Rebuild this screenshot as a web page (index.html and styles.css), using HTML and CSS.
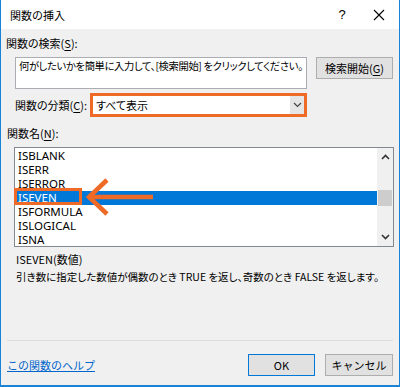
FILE: index.html
```html
<!DOCTYPE html>
<html>
<head>
  <title>関数の挿入</title>
  <link rel="stylesheet" href="styles.css">
</head>
<body>
  <div class="dialog">
    <div class="titlebar">
      <div class="title">関数の挿入</div>
      <div class="help-btn">?</div>
      <div class="close-btn">
        <svg width="12" height="12" viewBox="0 0 12 12"><path d="M1 1 L11 11 M11 1 L1 11" stroke="#000" stroke-width="1.1" fill="none"/></svg>
      </div>
    </div>

    <div class="content">
      <div class="label label-search">関数の検索(<u>S</u>):</div>
      <div class="search-row">
        <div class="search-box">何がしたいかを簡単に入力して、[検索開始] をクリックしてください。</div>
        <div class="btn btn-search">検索開始(<u>G</u>)</div>
      </div>

      <div class="category-row">
        <div class="label">関数の分類(<u>C</u>):</div>
        <div class="select">
          <span class="select-text">すべて表示</span>
          <span class="select-drop">
            <svg width="9" height="6" viewBox="0 0 9 6"><path d="M1 1 L4.5 4.5 L8 1" stroke="#444" stroke-width="1.2" fill="none"/></svg>
          </span>
        </div>
      </div>

      <div class="label label-names">関数名(<u>N</u>):</div>
      <div class="listbox">
        <div class="items">
          <div class="item">ISBLANK</div>
          <div class="item">ISERR</div>
          <div class="item">ISERROR</div>
          <div class="item selected">ISEVEN</div>
          <div class="item">ISFORMULA</div>
          <div class="item">ISLOGICAL</div>
          <div class="item">ISNA</div>
        </div>
        <div class="scrollbar">
          <svg class="sb-arrow" width="9" height="6" viewBox="0 0 9 6"><path d="M1 5 L4.5 1.5 L8 5" stroke="#333" stroke-width="1.6" fill="none"/></svg>
          <div class="sb-track"><div class="sb-thumb"></div></div>
          <svg class="sb-arrow" width="9" height="6" viewBox="0 0 9 6"><path d="M1 1 L4.5 4.5 L8 1" stroke="#333" stroke-width="1.6" fill="none"/></svg>
        </div>
        <div class="mark-box"></div>
        <svg class="mark-arrow" width="70" height="40" viewBox="0 0 70 40">
          <path d="M3 20 L68 20" stroke="#ee6a26" stroke-width="4.5" fill="none"/>
          <path d="M22 3 L4 20 L22 37" stroke="#ee6a26" stroke-width="4.5" fill="none"/>
        </svg>
      </div>

      <div class="desc">
        <div class="syntax">ISEVEN(数値)</div>
        <div class="explain">引き数に指定した数値が偶数のとき TRUE を返し、奇数のとき FALSE を返します。</div>
      </div>
    </div>

    <div class="footer">
      <a class="help-link" href="#">この関数のヘルプ</a>
      <div class="btn btn-ok">OK</div>
      <div class="btn btn-cancel">キャンセル</div>
    </div>
  </div>
</body>
</html>
```

FILE: styles.css
```css
body { margin: 0; font-family: "Noto Sans CJK JP", sans-serif; font-size: 11px; color: #000; }
u { text-decoration-thickness: 1px; text-underline-offset: 2px; }

.dialog { width: 400px; height: 387px; box-sizing: border-box; background: #f0f0f0; border: 1px solid #1883d7; border-top: none; border-bottom-width: 2px; display: flex; flex-direction: column; }

.titlebar { height: 29px; background: #fff; display: flex; align-items: center; flex-shrink: 0; }
.title { padding-left: 9px; flex: 1; font-size: 11px; }
.help-btn { width: 20px; text-align: center; font-family: "Liberation Sans", sans-serif; font-size: 13px; margin-right: 21px; }
.close-btn { width: 12px; height: 12px; margin-right: 14px; display: flex; }

.content { padding: 0 5px; line-height: 14px; font-feature-settings: "palt"; }
.label-search { margin-top: 7px; }

.search-row { display: flex; margin-top: 7px; padding-left: 9px; align-items: flex-start; }
.search-box { background: #fff; border: 1px solid #abadb3; padding: 1px 3px; box-sizing: border-box; width: 292px; height: 32px; line-height: 14px; font-size: 10.3px; letter-spacing: -0.35px; white-space: nowrap; overflow: hidden; }
.btn { height: 22px; box-sizing: border-box; border: 1px solid #adadad; background: #e1e1e1; display: flex; align-items: center; justify-content: center; }
.btn-search { width: 77px; margin-left: 9px; }

.category-row { display: flex; align-items: center; margin-top: 4px; padding-left: 9px; }
.category-row .label { width: 75px; }
.select { width: 217px; height: 24px; box-sizing: border-box; border: 3px solid #ee6a26; background: #fff; display: flex; align-items: stretch; }
.select-text { flex: 1; padding-left: 3px; display: flex; align-items: center; }
.select-drop { width: 14px; background: #e5e5e5; display: flex; align-items: center; justify-content: center; }

.label-names { margin-top: 9px; padding-left: 1px; }

.listbox { position: relative; margin: 7px 0 0 8px; width: 380px; height: 100px; box-sizing: border-box; border: 1px solid #828790; background: #fff; display: flex; }
.items { flex: 1; padding-top: 1px; font-family: "Noto Sans", sans-serif; font-size: 11.5px; }
.item { height: 14px; line-height: 14px; padding-left: 3px; }
.item.selected { background: #0078d7; color: #fff; }
.scrollbar { width: 16px; background: #f0f0f0; display: flex; flex-direction: column; align-items: center; }
.sb-arrow { margin: 6px 0; flex-shrink: 0; }
.sb-track { flex: 1; width: 100%; position: relative; }
.sb-thumb { position: absolute; left: 1px; right: 1px; top: 24px; height: 16px; background: #cdcdcd; }
.mark-box { position: absolute; left: -1px; top: 40px; width: 68px; height: 17px; box-sizing: border-box; border: 3px solid #ee6a26; }
.mark-arrow { position: absolute; left: 70px; top: 29px; }

.desc { margin-top: 4px; padding-left: 10px; line-height: 17px; }
.syntax { font-size: 11px; }
.explain { font-size: 10.5px; white-space: nowrap; }

.footer { margin: auto 6px 0 6px; border-top: 1px solid #dcdcdc; padding: 13px 0 9px; display: flex; align-items: center; }
.help-link { flex: 1; color: #0066cc; text-decoration: underline; font-size: 11px; }
.btn-ok { width: 67px; border-color: #0078d7; margin-right: 10px; }
.btn-cancel { width: 68px; }
```
